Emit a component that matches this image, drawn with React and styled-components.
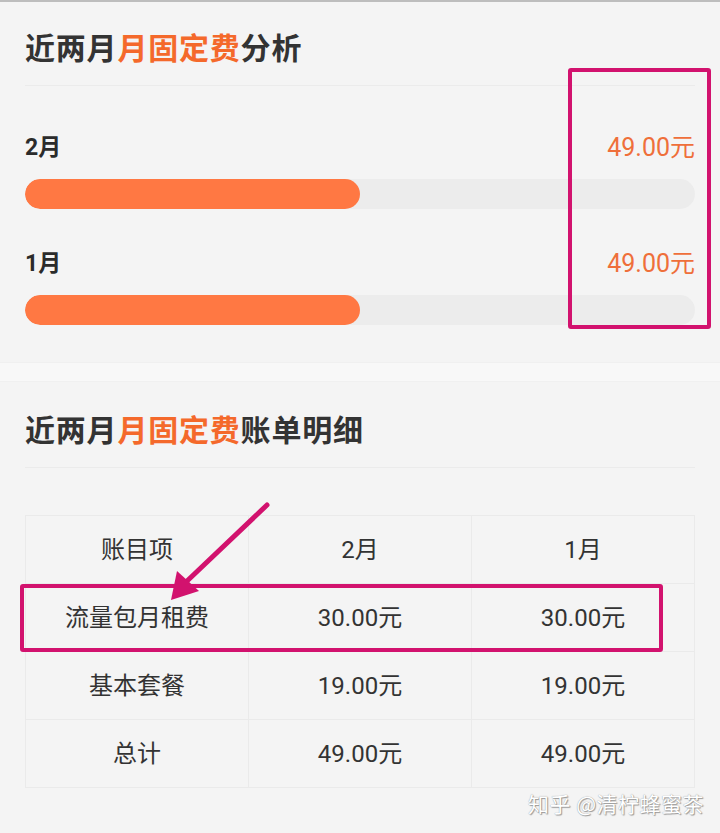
import React from 'react';
import styled, { createGlobalStyle } from 'styled-components';

const GlobalStyle = createGlobalStyle`
  html, body {
    margin: 0;
    padding: 0;
    background: #f4f4f4;
  }
  body {
    font-family: Roboto, "Noto Sans CJK SC", "Noto Sans", sans-serif;
    color: #333;
  }
`;

const Page = styled.div`
  position: relative;
  width: 720px;
  height: 833px;
  overflow: hidden;
  border-top: 2px solid #bdbdbd;
  box-sizing: border-box;
  background: #f4f4f4;
`;

const Card = styled.section`
  padding: ${(p) => p.pt}px 25px ${(p) => p.pb || 0}px;
  background: #f4f4f4;
`;

const Strip = styled.div`
  height: 18px;
  background: #f8f8f8;
  border-top: 1px solid #f0f0f0;
  border-bottom: 1px solid #f0f0f0;
`;

const Title = styled.h2`
  margin: 0;
  font-size: 30px;
  line-height: 40px;
  font-weight: 700;
  letter-spacing: 0.8px;
  color: #333;
  font-family: "Noto Sans CJK SC", sans-serif;
  padding-bottom: 19px;
  border-bottom: 1px solid #ebebeb;
`;

const Hi = styled.span`
  color: #f4692b;
`;

const MonthRow = styled.div`
  display: flex;
  justify-content: space-between;
  align-items: center;
  height: 30px;
  margin-top: ${(p) => p.mt}px;
`;

const MonthLabel = styled.span`
  font-size: 23px;
  font-weight: 700;
  color: #2b2b2b;
`;

const Amount = styled.span`
  font-size: 25px;
  color: #ef6f3a;
`;

const Track = styled.div`
  margin-top: 19px;
  height: 30px;
  border-radius: 15px;
  background: #ececec;
  overflow: hidden;
`;

const Fill = styled.div`
  height: 100%;
  border-radius: 15px;
  background: #ff7843;
`;

const Table = styled.div`
  margin-top: 47px;
  display: grid;
  grid-template-columns: repeat(3, 1fr);
  border-top: 1px solid #eaeaea;
  border-left: 1px solid #eaeaea;
`;

const Cell = styled.div`
  height: 68px;
  box-sizing: border-box;
  padding-bottom: 5px;
  display: flex;
  align-items: center;
  justify-content: center;
  font-size: 24px;
  color: #333;
  border-right: 1px solid #eaeaea;
  border-bottom: 1px solid #eaeaea;
`;

const Mark = styled.div`
  position: absolute;
  border: 4px solid #d2126e;
  border-radius: 3px;
  box-sizing: border-box;
`;

const Arrow = styled.svg`
  position: absolute;
  left: 0;
  top: 0;
  pointer-events: none;
`;

const Watermark = styled.div`
  position: absolute;
  right: 16px;
  top: 786px;
  font-size: 21px;
  color: #ffffff;
  font-family: "Noto Sans CJK SC", sans-serif;
  text-shadow: 0 0 1px #8a8a8a, 1px 1px 1px #9a9a9a;
  letter-spacing: 0.5px;
`;

const months = [
  { label: '2月', amount: '49.00元', pct: 50 },
  { label: '1月', amount: '49.00元', pct: 50 },
];

const rows = [
  ['账目项', '2月', '1月'],
  ['流量包月租费', '30.00元', '30.00元'],
  ['基本套餐', '19.00元', '19.00元'],
  ['总计', '49.00元', '49.00元'],
];

export default function App() {
  return (
    <Page>
      <GlobalStyle />
      <Card pt={24} pb={37}>
        <Title>
          近两月<Hi>月固定费</Hi>分析
        </Title>
        {months.map((m, i) => (
          <React.Fragment key={m.label}>
            <MonthRow mt={i === 0 ? 44 : 37}>
              <MonthLabel>{m.label}</MonthLabel>
              <Amount>{m.amount}</Amount>
            </MonthRow>
            <Track>
              <Fill style={{ width: `${m.pct}%` }} />
            </Track>
          </React.Fragment>
        ))}
      </Card>
      <Strip />
      <Card pt={26} pb={40}>
        <Title>
          近两月<Hi>月固定费</Hi>账单明细
        </Title>
        <Table>
          {rows.flat().map((c, i) => (
            <Cell key={i}>{c}</Cell>
          ))}
        </Table>
      </Card>

      <Mark style={{ left: 568, top: 66, width: 143, height: 261 }} />
      <Mark style={{ left: 20, top: 582, width: 643, height: 68 }} />
      <Arrow width="720" height="833" viewBox="0 0 720 833">
        <line x1="267" y1="503" x2="186" y2="580" stroke="#d2126e" strokeWidth="5" strokeLinecap="round" />
        <polygon points="171,598 177,569 199,589" fill="#d2126e" />
      </Arrow>
      <Watermark>知乎 @清柠蜂蜜茶</Watermark>
    </Page>
  );
}
